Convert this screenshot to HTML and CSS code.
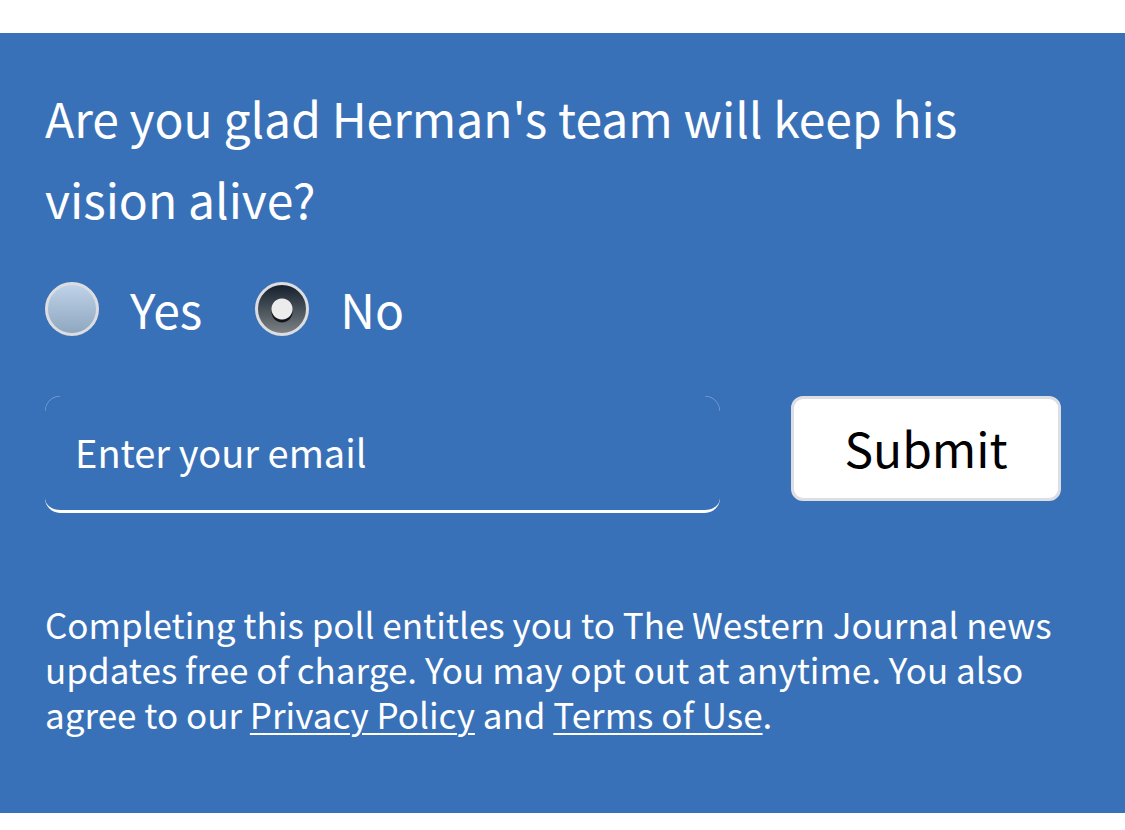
FILE: index.html
```html
<!DOCTYPE html>
<html lang="en">
<head>
  <meta charset="UTF-8">
  <title>Reader Poll</title>
  <meta name="viewport" content="width=device-width, initial-scale=1.0">
  <link rel="stylesheet" href="styles.css">
</head>
<body>

  <form class="poll">
    <h2 class="poll-question" id="question">Are you glad Herman's team will keep his vision alive?</h2>

    <div class="poll-answers" role="radiogroup" aria-labelledby="question">
      <input type="radio" id="yes" name="answer" value="yes">
      <label for="yes">Yes</label>
      <input type="radio" id="no" name="answer" value="no" checked>
      <label for="no">No</label>
    </div>

    <div class="poll-signup">
      <input type="email" class="poll-email" name="email" aria-label="Enter your email" placeholder="Enter your email">
      <button type="submit" class="poll-submit">Submit</button>
    </div>

    <p class="poll-terms">Completing this poll entitles you to The Western Journal news updates free of charge. You may opt out at anytime. You also agree to our <a href="#privacy">Privacy Policy</a> and <a href="#terms">Terms of Use</a>.</p>
  </form>

</body>
</html>
```
FILE: styles.css
```css
* {
  box-sizing: border-box;
}

body {
  margin: 0;
  padding: 33px 0 17px;
  background: #ffffff;
  font-family: "Noto Sans CJK SC", "Noto Sans", sans-serif;
}

.poll {
  padding: 44px 64px 77px 45px;
  background: #3971b8;
  color: #ffffff;
}

.poll-question {
  margin: 0;
  font-size: 48px;
  font-weight: 400;
  line-height: 81px;
}

.poll-answers {
  display: flex;
  align-items: center;
  margin-top: 29px;
  font-size: 48px;
  line-height: 81px;
}

.poll-answers label {
  margin: 0 53px 0 31px;
}

.poll-answers input {
  appearance: none;
  width: 54px;
  height: 54px;
  margin: 0;
  border: 3px solid #dddddf;
  border-radius: 50%;
  background: linear-gradient(#c2d5eb, #8ba4bd) border-box;
}

/* white dot with a small dark drop under it */
.poll-answers input:checked {
  background:
    radial-gradient(circle at 50% 50%, #ececec 10px, transparent 11px),
    radial-gradient(circle at 50% 56%, #10151a 10px, transparent 11px),
    linear-gradient(#14202d, #7b8084);
}

.poll-signup {
  display: flex;
  align-items: flex-start;
  gap: 71px;
  margin-top: 47px;
}

/* the two gradients draw the hairline top corners */
.poll-email {
  flex: 1;
  min-width: 0;
  height: 117px;
  padding: 0 30px 3px;
  border: 0;
  border-bottom: 3px solid #ffffff;
  border-radius: 15px;
  background:
    radial-gradient(circle at 100% 100%, transparent 14px, #8fb2dc 15px) left top / 15px 15px no-repeat,
    radial-gradient(circle at 0 100%, transparent 14px, #8fb2dc 15px) right top / 15px 15px no-repeat;
  color: #ffffff;
  font-family: inherit;
  font-size: 38px;
}

.poll-email::placeholder {
  color: #ffffff;
  opacity: 1;
}

.poll-submit {
  width: 270px;
  height: 105px;
  padding: 0 0 3px;
  border: 3px solid #dcdee3;
  border-radius: 12px;
  background: #ffffff;
  color: #000000;
  font-family: inherit;
  font-size: 48px;
  line-height: 81px;
}

.poll-terms {
  margin: 88px 0 0;
  font-size: 35px;
  line-height: 45px;
}

.poll-terms a {
  color: inherit;
  text-decoration-thickness: 2px;
  text-underline-offset: 4px;
}
```
